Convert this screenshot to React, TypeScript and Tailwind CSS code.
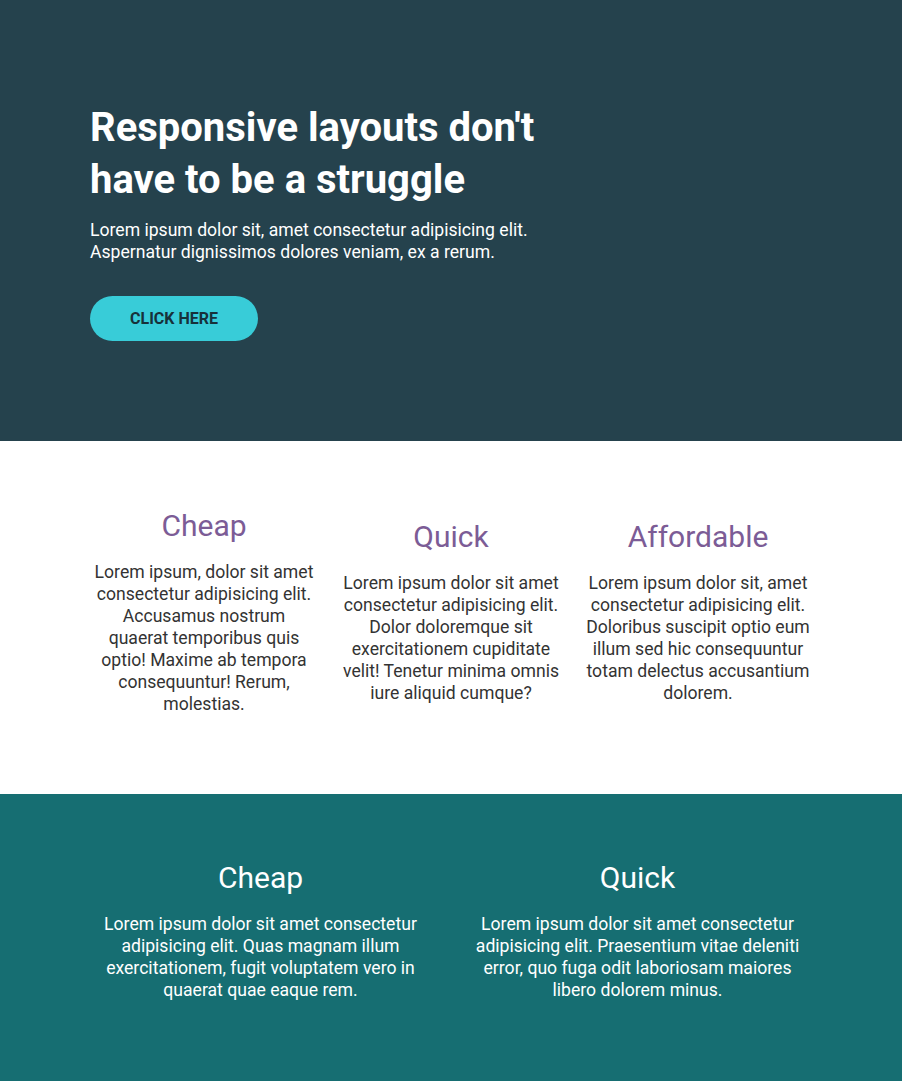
import React from "react";

const features = [
  {
    title: "Cheap",
    text: "Lorem ipsum, dolor sit amet consectetur adipisicing elit. Accusamus nostrum quaerat temporibus quis optio! Maxime ab tempora consequuntur! Rerum, molestias.",
  },
  {
    title: "Quick",
    text: "Lorem ipsum dolor sit amet consectetur adipisicing elit. Dolor doloremque sit exercitationem cupiditate velit! Tenetur minima omnis iure aliquid cumque?",
  },
  {
    title: "Affordable",
    text: "Lorem ipsum dolor sit, amet consectetur adipisicing elit. Doloribus suscipit optio eum illum sed hic consequuntur totam delectus accusantium dolorem.",
  },
];

const bottom = [
  {
    title: "Cheap",
    text: "Lorem ipsum dolor sit amet consectetur adipisicing elit. Quas magnam illum exercitationem, fugit voluptatem vero in quaerat quae eaque rem.",
  },
  {
    title: "Quick",
    text: "Lorem ipsum dolor sit amet consectetur adipisicing elit. Praesentium vitae deleniti error, quo fuga odit laboriosam maiores libero dolorem minus.",
  },
];

export default function App() {
  return (
    <div className="font-['Roboto',sans-serif]">
      <section className="bg-[#25424d] pt-[102px] pb-[100px] pl-[90px]">
        <div className="w-[480px]">
          <h1 className="text-[40px] leading-[52px] font-bold text-white">
            Responsive layouts don't have to be a struggle
          </h1>
          <p className="mt-[13px] text-[17.6px] leading-[22px] text-white">
            Lorem ipsum dolor sit, amet consectetur adipisicing elit. Aspernatur dignissimos dolores veniam, ex a rerum.
          </p>
          <button className="mt-[33px] w-[168px] h-[45px] rounded-full bg-[#38ccd8] text-[#17313a] text-[16px] font-bold uppercase">
            Click here
          </button>
        </div>
      </section>

      <section className="bg-white pt-[67px] pb-[79px]">
        <div className="mx-auto w-[741px] grid grid-cols-3 items-center">
          {features.map((f) => (
            <div key={f.title} className="px-[11px] text-center">
              <h2 className="text-[30px] leading-[36px] text-[#7c5c96]">{f.title}</h2>
              <p className="mt-[17px] text-[17.6px] leading-[22px] text-[#333]">{f.text}</p>
            </div>
          ))}
        </div>
      </section>

      <section className="bg-[#166e72] pt-[66px] pb-[80px] pl-[72px]">
        <div className="w-[754px] grid grid-cols-2">
          {bottom.map((f) => (
            <div key={f.title} className="px-[18px] text-center text-white">
              <h2 className="text-[30px] leading-[36px]">{f.title}</h2>
              <p className="mt-[17px] text-[17.6px] leading-[22px]">{f.text}</p>
            </div>
          ))}
        </div>
      </section>
    </div>
  );
}
